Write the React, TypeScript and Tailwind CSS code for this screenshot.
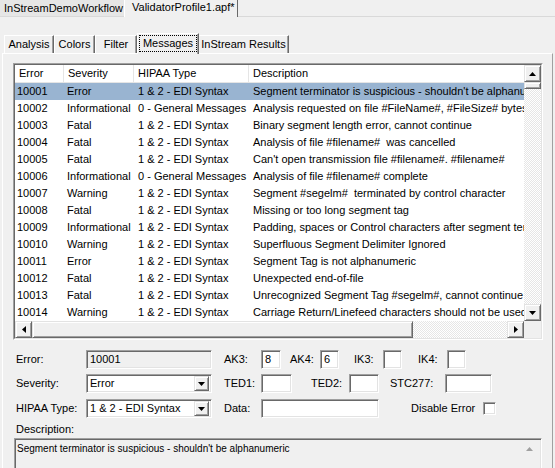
import React from 'react';

const rows = [
  ['10001', 'Error', '1 & 2 - EDI Syntax', "Segment terminator is suspicious - shouldn't be alphanumeric"],
  ['10002', 'Informational', '0 - General Messages', 'Analysis requested on file #FileName#, #FileSize# bytes'],
  ['10003', 'Fatal', '1 & 2 - EDI Syntax', 'Binary segment length error, cannot continue'],
  ['10004', 'Fatal', '1 & 2 - EDI Syntax', 'Analysis of file #filename#  was cancelled'],
  ['10005', 'Fatal', '1 & 2 - EDI Syntax', "Can't open transmission file #filename#. #filename#"],
  ['10006', 'Informational', '0 - General Messages', 'Analysis of file #filename# complete'],
  ['10007', 'Warning', '1 & 2 - EDI Syntax', 'Segment #segelm#  terminated by control character'],
  ['10008', 'Fatal', '1 & 2 - EDI Syntax', 'Missing or too long segment tag'],
  ['10009', 'Informational', '1 & 2 - EDI Syntax', 'Padding, spaces or Control characters after segment terminator'],
  ['10010', 'Warning', '1 & 2 - EDI Syntax', 'Superfluous Segment Delimiter Ignored'],
  ['10011', 'Error', '1 & 2 - EDI Syntax', 'Segment Tag is not alphanumeric'],
  ['10012', 'Fatal', '1 & 2 - EDI Syntax', 'Unexpected end-of-file'],
  ['10013', 'Fatal', '1 & 2 - EDI Syntax', 'Unrecognized Segment Tag #segelm#, cannot continue'],
  ['10014', 'Warning', '1 & 2 - EDI Syntax', 'Carriage Return/Linefeed characters should not be used'],
];

const raised =
  'bg-[#f0f0f0] border border-t-[#e3e3e3] border-l-[#e3e3e3] border-b-[#696969] border-r-[#696969] shadow-[inset_1px_1px_0_#ffffff,inset_-1px_-1px_0_#a0a0a0]';
const sunken =
  'border border-t-[#a0a0a0] border-l-[#a0a0a0] border-b-white border-r-white shadow-[inset_1px_1px_0_#696969,inset_-1px_-1px_0_#e3e3e3]';
const track = 'bg-[repeating-conic-gradient(#ffffff_0_25%,#e6e6e6_0_50%)] bg-[length:2px_2px]';

function Arrow({ dir }: { dir: 'up' | 'down' | 'left' | 'right' }) {
  const pts = {
    up: '0,4 7,4 3.5,0',
    down: '0,0 7,0 3.5,4',
    left: '4,0 4,7 0,3.5',
    right: '0,0 0,7 4,3.5',
  }[dir];
  const vert = dir === 'up' || dir === 'down';
  return (
    <svg width={vert ? 7 : 4} height={vert ? 4 : 7} viewBox={vert ? '0 0 7 4' : '0 0 4 7'}>
      <polygon points={pts} fill="#000" />
    </svg>
  );
}

function Box({ w, value, grey }: { w: string; value?: string; grey?: boolean }) {
  return (
    <div className={`${w} h-[19px] ${sunken} ${grey ? 'bg-[#f0f0f0]' : 'bg-white'} flex items-center pl-[3px]`}>
      {value}
    </div>
  );
}

function Combo({ value }: { value: string }) {
  return (
    <div className={`w-[126px] h-[19px] ${sunken} bg-white flex items-center pl-[3px] pr-[2px]`}>
      <span className="flex-1">{value}</span>
      <div className={`w-[15px] h-[15px] ${raised} flex items-center justify-center`}>
        <Arrow dir="down" />
      </div>
    </div>
  );
}

export default function App() {
  return (
    <div
      className="w-[555px] h-[468px] overflow-hidden bg-[#f0f0f0] text-[11px] text-black leading-none"
      style={{ fontFamily: '"Liberation Sans", Arial, sans-serif' }}
    >
      {/* document tabs */}
      <div className="h-[17px] flex items-end border-b border-[#d9d9d9]">
        <div className="w-[124px] h-[16px] bg-[#e6e6e6] pl-[4px] flex items-center whitespace-nowrap">InStreamDemoWorkflow</div>
        <div className="w-[114px] h-[17px] bg-[#f0f0f0] border-l border-white border-r border-r-[#696969] pl-[7px] pt-[2px] -mb-px whitespace-nowrap">
          ValidatorProfile1.apf*
        </div>
      </div>

      {/* inner tabs */}
      <div className="mt-[15px] pl-[4px] h-[21px] flex items-end">
        {[
          ['Analysis', 'w-[50px]'],
          ['Colors', 'w-[41px]'],
          ['Filter', 'w-[42px]'],
        ].map(([t, w]) => (
          <div key={t} className={`${w} h-[18px] border-t border-l border-white border-r border-r-[#696969] shadow-[inset_-1px_0_0_#a0a0a0] flex items-center justify-center`}>
            {t}
          </div>
        ))}
        <div className="w-[62px] h-[21px] -mb-px relative z-10 bg-[#f0f0f0] border-t border-l border-white border-r border-r-[#696969] shadow-[inset_-1px_0_0_#a0a0a0] flex items-center justify-center pb-[2px]">
          <span className="border border-dotted border-black px-[3px] py-[2px]">Messages</span>
        </div>
        <div className="w-[90px] h-[18px] border-t border-white border-r border-r-[#696969] shadow-[inset_-1px_0_0_#a0a0a0] flex items-center justify-center">
          InStream Results
        </div>
      </div>

      {/* tab panel */}
      <div className="mx-[2px] h-[420px] border-t border-l border-white border-r border-r-[#a0a0a0] pl-[10px] pt-[9px]">
        {/* list view */}
        <div className="w-[530px] h-[277px] border border-t-[#a0a0a0] border-l-[#a0a0a0] border-b-white border-r-white">
          <div className="w-full h-full border border-t-[#696969] border-l-[#696969] border-b-[#e3e3e3] border-r-[#e3e3e3] bg-white flex">
            <div className="w-[509px] flex flex-col">
              <div className="h-[18px] flex border-b border-[#e5e5e5]">
                <div className="w-[49px] pl-[4px] flex items-center border-r border-[#e5e5e5]">Error</div>
                <div className="w-[70px] pl-[4px] flex items-center border-r border-[#e5e5e5]">Severity</div>
                <div className="w-[115px] pl-[4px] flex items-center border-r border-[#e5e5e5]">HIPAA Type</div>
                <div className="flex-1 pl-[4px] flex items-center">Description</div>
              </div>
              {rows.map((r, i) => (
                <div key={r[0]} className={`h-[17px] flex items-center whitespace-pre overflow-hidden ${i === 0 ? 'bg-[#99b4d1]' : ''}`}>
                  <div className="w-[49px] pl-[2px] shrink-0">{r[0]}</div>
                  <div className="w-[70px] pl-[3px] shrink-0">{r[1]}</div>
                  <div className="w-[115px] pl-[4px] shrink-0">{r[2]}</div>
                  <div className="flex-1 pl-[4px] overflow-hidden">{r[3]}</div>
                </div>
              ))}
              <div className={`h-[17px] flex ${track}`}>
                <div className={`w-[17px] h-[17px] ${raised} flex items-center justify-center`}>
                  <Arrow dir="left" />
                </div>
                <div className={`w-[381px] h-[17px] ${raised}`} />
                <div className="flex-1" />
                <div className={`w-[17px] h-[17px] ${raised} flex items-center justify-center`}>
                  <Arrow dir="right" />
                </div>
              </div>
            </div>
            <div className="w-[17px] flex flex-col">
              <div className={`flex-1 flex flex-col ${track}`}>
                <div className={`h-[17px] ${raised} flex items-center justify-center`}>
                  <Arrow dir="up" />
                </div>
                <div className={`h-[7px] ${raised}`} />
                <div className="flex-1" />
                <div className={`h-[17px] ${raised} flex items-center justify-center`}>
                  <Arrow dir="down" />
                </div>
              </div>
              <div className="h-[17px] bg-[#f0f0f0]" />
            </div>
          </div>
        </div>

        {/* detail form */}
        <div className="mt-[10px] pl-[3px] flex items-center h-[19px]">
          <span className="w-[70px]">Error:</span>
          <Box w="w-[126px]" value="10001" grey />
          <span className="ml-[12px] w-[37px]">AK3:</span>
          <Box w="w-[20px]" value="8" />
          <span className="ml-[9px] w-[30px]">AK4:</span>
          <Box w="w-[19px]" value="6" />
          <span className="ml-[15px] w-[29px]">IK3:</span>
          <Box w="w-[19px]" />
          <span className="ml-[16px] w-[29px]">IK4:</span>
          <Box w="w-[19px]" />
        </div>
        <div className="mt-[5px] pl-[3px] flex items-center h-[19px]">
          <span className="w-[70px]">Severity:</span>
          <Combo value="Error" />
          <span className="ml-[12px] w-[37px]">TED1:</span>
          <Box w="w-[31px]" />
          <span className="ml-[19px] w-[38px]">TED2:</span>
          <Box w="w-[30px]" />
          <span className="ml-[11px] w-[55px]">STC277:</span>
          <Box w="w-[47px]" />
        </div>
        <div className="mt-[6px] pl-[3px] flex items-center h-[19px]">
          <span className="w-[70px]">HIPAA Type:</span>
          <Combo value="1 & 2 - EDI Syntax" />
          <span className="ml-[12px] w-[37px]">Data:</span>
          <Box w="w-[118px]" />
          <span className="ml-[32px]">Disable Error</span>
          <div className={`ml-[8px] w-[13px] h-[13px] bg-white ${sunken}`} />
        </div>
        <div className="mt-[5px] pl-[3px] h-[13px] flex items-center">Description:</div>
        <div className={`mt-[2px] ml-[1px] w-[528px] h-[40px] bg-[#f0f0f0] ${sunken} flex items-start pt-[5px] pl-[2px] pr-[8px] text-[10px]`}>
          <span className="flex-1">Segment terminator is suspicious - shouldn't be alphanumeric</span>
          <svg width="7" height="4" viewBox="0 0 7 4" className="mt-[3px]">
            <polygon points="0,4 7,4 3.5,0" fill="#a0a0a0" />
          </svg>
        </div>
      </div>
    </div>
  );
}
